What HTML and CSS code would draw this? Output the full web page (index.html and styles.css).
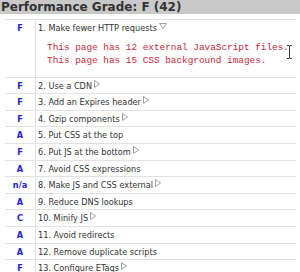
FILE: index.html
```html
<!DOCTYPE html>
<html lang="en">
<head>
<meta charset="UTF-8">
<meta name="viewport" content="width=device-width, initial-scale=1.0">
<title>Performance Grade</title>
<link rel="stylesheet" href="styles.css">
</head>
<body>
  <div class="panel">
    <div class="grade-title">Performance Grade: F (42)</div>
    <div class="rules">
      <div class="rule open">
        <div class="grade">F</div>
        <div class="rule-body">
          <div class="rule-name">1. Make fewer HTTP requests<svg class="toggle down" width="8" height="6" viewBox="0 0 8 6"><polygon points="0.5,0.5 7.5,0.5 4,5.5"/></svg></div>
          <div class="rule-msg">This page has 12 external JavaScript files.<br>This page has 15 CSS background images.</div>
        </div>
        <svg class="cursor" width="7" height="14" viewBox="0 0 7 14"><path d="M1 0.5h2l0.5 0.5l0.5-0.5h2M3.5 1v12M1 13.5h2l0.5-0.5l0.5 0.5h2"/></svg>
      </div>
      <div class="rule">
        <div class="grade">F</div>
        <div class="rule-name">2. Use a CDN<svg class="toggle" width="6" height="8" viewBox="0 0 6 8"><polygon points="0.5,0.5 5.5,4 0.5,7.5"/></svg></div>
      </div>
      <div class="rule">
        <div class="grade">F</div>
        <div class="rule-name">3. Add an Expires header<svg class="toggle" width="6" height="8" viewBox="0 0 6 8"><polygon points="0.5,0.5 5.5,4 0.5,7.5"/></svg></div>
      </div>
      <div class="rule">
        <div class="grade">F</div>
        <div class="rule-name">4. Gzip components<svg class="toggle" width="6" height="8" viewBox="0 0 6 8"><polygon points="0.5,0.5 5.5,4 0.5,7.5"/></svg></div>
      </div>
      <div class="rule">
        <div class="grade">A</div>
        <div class="rule-name">5. Put CSS at the top</div>
      </div>
      <div class="rule">
        <div class="grade">F</div>
        <div class="rule-name">6. Put JS at the bottom<svg class="toggle" width="6" height="8" viewBox="0 0 6 8"><polygon points="0.5,0.5 5.5,4 0.5,7.5"/></svg></div>
      </div>
      <div class="rule">
        <div class="grade">A</div>
        <div class="rule-name">7. Avoid CSS expressions</div>
      </div>
      <div class="rule">
        <div class="grade">n/a</div>
        <div class="rule-name">8. Make JS and CSS external<svg class="toggle" width="6" height="8" viewBox="0 0 6 8"><polygon points="0.5,0.5 5.5,4 0.5,7.5"/></svg></div>
      </div>
      <div class="rule">
        <div class="grade">A</div>
        <div class="rule-name">9. Reduce DNS lookups</div>
      </div>
      <div class="rule">
        <div class="grade">C</div>
        <div class="rule-name">10. Minify JS<svg class="toggle" width="6" height="8" viewBox="0 0 6 8"><polygon points="0.5,0.5 5.5,4 0.5,7.5"/></svg></div>
      </div>
      <div class="rule">
        <div class="grade">A</div>
        <div class="rule-name">11. Avoid redirects</div>
      </div>
      <div class="rule">
        <div class="grade">A</div>
        <div class="rule-name">12. Remove duplicate scripts</div>
      </div>
      <div class="rule">
        <div class="grade">F</div>
        <div class="rule-name">13. Configure ETags<svg class="toggle" width="6" height="8" viewBox="0 0 6 8"><polygon points="0.5,0.5 5.5,4 0.5,7.5"/></svg></div>
      </div>
    </div>
  </div>
</body>
</html>
```

FILE: styles.css
```css
body {
  margin: 0;
  padding: 0;
  background-color: #fff;
  font-family: 'DejaVu Sans', 'Liberation Sans', sans-serif;
  font-stretch: condensed;
  font-size: 9.1px;
  color: #333;
  overflow: hidden;
}
.panel {
  width: 300px;
}
.grade-title {
  height: 14px;
  line-height: 14px;
  padding-left: 1px;
  background-color: #c9c9c9;
  font-size: 12px;
  font-stretch: normal;
  font-weight: bold;
  color: #333;
  white-space: nowrap;
}
.rules {
  margin: 5px 4px 0 5px;
  border-top: 1px solid #e2e2e2;
}
.rule {
  position: relative;
  display: grid;
  grid-template-columns: 31px 1fr;
  border-bottom: 1px solid #e2e2e2;
}
.grade {
  height: 15.6px;
  line-height: 16px;
  border-right: 1px solid #e2e2e2;
  text-align: center;
  font-weight: bold;
  color: #2323c8;
}
.open .grade {
  height: auto;
}
.rule-name {
  height: 15.6px;
  line-height: 16px;
  padding-left: 2px;
  white-space: nowrap;
}
.open .rule-body {
  padding-bottom: 10px;
}
.toggle {
  margin-left: 2px;
  vertical-align: 1px;
  fill: #fff;
  stroke: #a0a0a0;
  stroke-width: 1;
}
.toggle.down {
  vertical-align: 2px;
}
.rule-msg {
  margin-top: 5px;
  padding-left: 11px;
  font-family: 'Liberation Mono', monospace;
  font-stretch: normal;
  font-size: 9.4px;
  line-height: 13px;
  color: #c8283c;
  white-space: nowrap;
  overflow: hidden;
}
.cursor {
  position: absolute;
  left: 281px;
  top: 25px;
  fill: none;
  stroke: #333;
  stroke-width: 1;
}
```
